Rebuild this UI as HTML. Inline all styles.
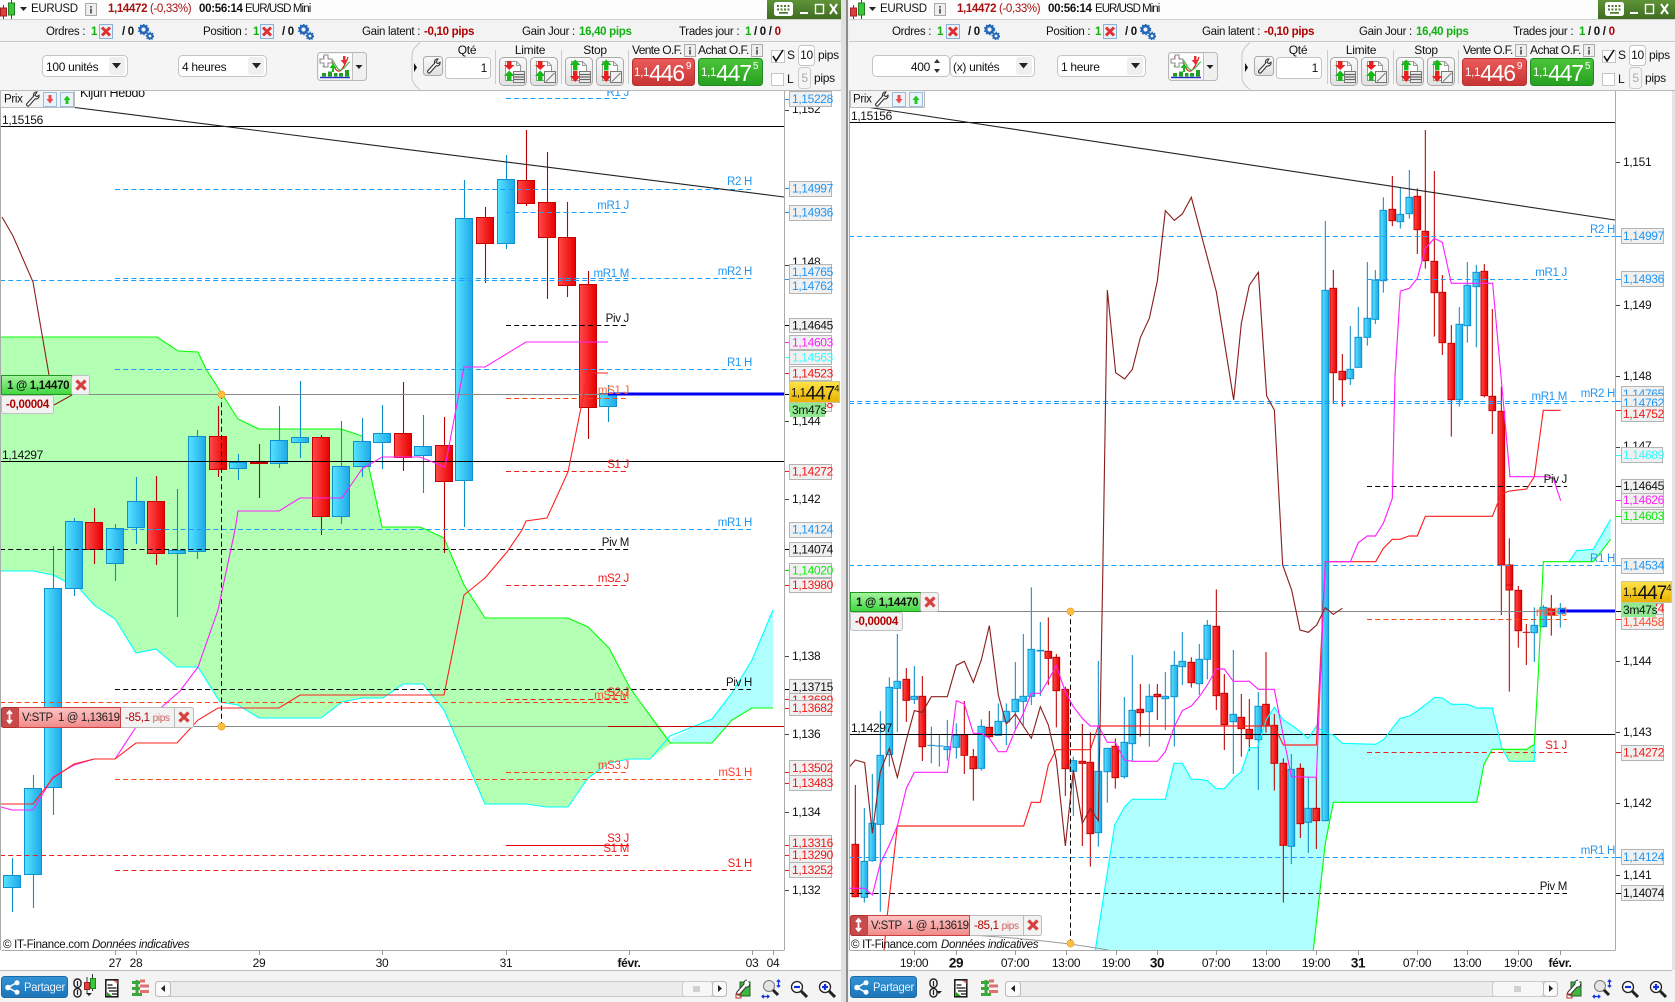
<!DOCTYPE html>
<html><head><meta charset="utf-8"><title>EURUSD</title>
<style>
html,body{margin:0;padding:0;background:#fff;width:1675px;height:1002px;overflow:hidden}
svg{display:block}
text{font-family:"Liberation Sans",sans-serif;font-size:11.5px;letter-spacing:-.3px;dominant-baseline:central;fill:#111}
.k{fill:#111}.bl{fill:#2196f3}.r{fill:#f01818}.dr{fill:#b00000}.g{fill:#12b012}
.e{text-anchor:end}.m{text-anchor:middle}.bd{font-weight:700}
.ax{font-size:12px;letter-spacing:-.35px}
.lb{fill:#f0f0f0;stroke:#b4b4b4;stroke-width:1}
.wb{stroke:#0e8ec8;stroke-width:3.2;fill:none}.wr{stroke:#c00000;stroke-width:3.2;fill:none}
.wb1{stroke:#0e8ec8;stroke-width:1.1;fill:none}.wr1{stroke:#c00000;stroke-width:1.1;fill:none}
.b{fill:url(#gb);stroke:#0f90d0;stroke-width:1}.c{fill:url(#gr);stroke:#c80000;stroke-width:1}
.b3{fill:url(#gb);stroke:#0f90d0;stroke-width:3}.c3{fill:url(#gr);stroke:#c80000;stroke-width:3}
.d{fill:none;stroke-dasharray:5 3.2;stroke-width:1}
.dbl{stroke:#1a9fff}.dbk{stroke:#000}.drd{stroke:#f02020}.dor{stroke:#f84818}
.ln{fill:none;stroke-width:1.1}
.ln3{fill:none;stroke-width:3.4}
.bx{fill:#fff;stroke:#c4c4c4;stroke-width:1}
</style></head><body>
<svg width="1675" height="1002" viewBox="0 0 1675 1002" xmlns="http://www.w3.org/2000/svg">
<defs>
<linearGradient id="gb" x1="0" x2="1" y1="0" y2="0"><stop offset="0" stop-color="#55e4ff"/><stop offset="1" stop-color="#1fa8e8"/></linearGradient>
<linearGradient id="gr" x1="0" x2="1" y1="0" y2="0"><stop offset="0" stop-color="#ff4a4a"/><stop offset="1" stop-color="#e80000"/></linearGradient>
<linearGradient id="gg" x1="0" x2="0" y1="0" y2="1"><stop offset="0" stop-color="#a6f5a0"/><stop offset="1" stop-color="#3fd63f"/></linearGradient>
<linearGradient id="gy" x1="0" x2="0" y1="0" y2="1"><stop offset="0" stop-color="#ffe44a"/><stop offset="1" stop-color="#e8b000"/></linearGradient>
<linearGradient id="gs" x1="0" x2="0" y1="0" y2="1"><stop offset="0" stop-color="#ffc4c4"/><stop offset="1" stop-color="#f08a8a"/></linearGradient>
<linearGradient id="gw" x1="0" x2="0" y1="0" y2="1"><stop offset="0" stop-color="#5f9338"/><stop offset="1" stop-color="#3f6c22"/></linearGradient>
<linearGradient id="gv" x1="0" x2="0" y1="0" y2="1"><stop offset="0" stop-color="#ea5c5a"/><stop offset="1" stop-color="#c83434"/></linearGradient>
<linearGradient id="ga" x1="0" x2="0" y1="0" y2="1"><stop offset="0" stop-color="#4cc43a"/><stop offset="1" stop-color="#27a020"/></linearGradient>
<linearGradient id="gbt" x1="0" x2="0" y1="0" y2="1"><stop offset="0" stop-color="#fafafa"/><stop offset="1" stop-color="#e0e0e0"/></linearGradient>
<linearGradient id="gp" x1="0" x2="0" y1="0" y2="1"><stop offset="0" stop-color="#3292d6"/><stop offset="1" stop-color="#1c76b8"/></linearGradient>
<symbol id="can" width="16" height="20" viewBox="0 0 16 20"><path d="M3.5 5v14M11.5 0v19" stroke="#444"/><rect x="0.5" y="8" width="6" height="8" fill="#e23c3c" stroke="#a02020"/><rect x="8.5" y="3" width="6" height="12" fill="#38c838" stroke="#208020"/></symbol>
<symbol id="xd" width="14" height="15" viewBox="0 0 14 15"><rect x=".5" y=".5" width="13" height="14" fill="#e9f2fb" stroke="#8ab0d8"/><path d="M3 3.5l8 8M11 3.5l-8 8" stroke="#e03030" stroke-width="3"/></symbol>
<symbol id="gear" width="16" height="16" viewBox="0 0 16 16"><circle cx="5.5" cy="5.5" r="3.4" fill="none" stroke="#2268b8" stroke-width="2.6"/><circle cx="5.5" cy="5.5" r="4.9" fill="none" stroke="#2268b8" stroke-width="1.6" stroke-dasharray="1.6 1.6"/><circle cx="12" cy="12" r="2.4" fill="none" stroke="#2268b8" stroke-width="2"/><circle cx="12" cy="12" r="3.7" fill="none" stroke="#2268b8" stroke-width="1.3" stroke-dasharray="1.4 1.4"/></symbol>
<symbol id="wr" width="15" height="17" viewBox="0 0 15 17"><path d="M12 1C9.5.7 8 2.8 8.6 5.2L2 12.5C.8 14 2.5 16 4 14.7L10.2 7.8C12.6 8.4 14.4 6.7 14 4.2L11.9 5.7 9.9 4.3Z" fill="#fff" stroke="#333" stroke-width="1.1"/></symbol>
<symbol id="i" width="12" height="13" viewBox="0 0 12 13"><rect x=".5" y=".5" width="11" height="12" fill="#eee" stroke="#aaa"/><path d="M5 3h2v1.6H5zM5 5.6h2V10.5H5z" fill="#666"/></symbol>
<symbol id="ad" width="14" height="15" viewBox="0 0 14 15"><rect x=".5" y=".5" width="13" height="14" fill="#eaf2fa" stroke="#9cbcdc"/><path d="M5.500 3h3v4h2L7 11.500 3.500 7h2z" fill="#f04848"/></symbol>
<symbol id="au" width="14" height="15" viewBox="0 0 14 15"><rect x=".5" y=".5" width="13" height="14" fill="#eaf2fa" stroke="#9cbcdc"/><path d="M5.500 12V8h-2L7 3.500 10.500 8h-2v4z" fill="#20c820"/></symbol>
<symbol id="lst" width="12" height="12" viewBox="0 0 12 12"><rect x=".5" y=".5" width="11" height="11" fill="#f0f0f0" stroke="#777"/><path d="M1 3.500h10M1 6h10M1 8.500h10" stroke="#666" stroke-width="1.300"/></symbol>
<symbol id="sl" width="12" height="12" viewBox="0 0 12 12"><rect x=".5" y=".5" width="11" height="11" fill="#f0f0f0" stroke="#777"/><path d="M2 10.500L10.500 2" stroke="#777"/></symbol>
<symbol id="bl1" width="28" height="29" viewBox="0 0 28 29"><rect x=".5" y=".5" width="27" height="28" rx="4" fill="url(#gbt)" stroke="#aaa"/><path d="M6.500 4.500h11l4 4v15h-15z" fill="#fff" stroke="#999"/><path d="M17.500 4.500v4h4" fill="none" stroke="#999"/><path d="M8 4h4.500v4h3L10.200 13 5 8h3z" fill="#e82020"/><path d="M8 24v-5H5l5.200-5.500L15.500 19h-3v5z" fill="#18b818"/><use href="#lst" x="14" y="14"/></symbol>
<symbol id="bl2" width="28" height="29" viewBox="0 0 28 29"><rect x=".5" y=".5" width="27" height="28" rx="4" fill="url(#gbt)" stroke="#aaa"/><path d="M6.500 4.500h11l4 4v15h-15z" fill="#fff" stroke="#999"/><path d="M17.500 4.500v4h4" fill="none" stroke="#999"/><path d="M8 4h4.500v4h3L10.200 13 5 8h3z" fill="#e82020"/><path d="M8 24v-5H5l5.200-5.500L15.500 19h-3v5z" fill="#18b818"/><use href="#sl" x="14" y="14"/></symbol>
<symbol id="bs1" width="28" height="29" viewBox="0 0 28 29"><rect x=".5" y=".5" width="27" height="28" rx="4" fill="url(#gbt)" stroke="#aaa"/><path d="M6.500 4.500h11l4 4v15h-15z" fill="#fff" stroke="#999"/><path d="M17.500 4.500v4h4" fill="none" stroke="#999"/><path d="M8 13.500V8H5l5.200-5.500L15.500 8h-3v5.500z" fill="#18b818"/><path d="M8 14h4.500v5h3L10.200 25 5 19h3z" fill="#e82020"/><use href="#lst" x="14" y="14"/></symbol>
<symbol id="bs2" width="28" height="29" viewBox="0 0 28 29"><rect x=".5" y=".5" width="27" height="28" rx="4" fill="url(#gbt)" stroke="#aaa"/><path d="M6.500 4.500h11l4 4v15h-15z" fill="#fff" stroke="#999"/><path d="M17.500 4.500v4h4" fill="none" stroke="#999"/><path d="M8 13.500V8H5l5.200-5.500L15.500 8h-3v5.500z" fill="#18b818"/><path d="M8 14h4.500v5h3L10.200 25 5 19h3z" fill="#e82020"/><use href="#sl" x="14" y="14"/></symbol>
<symbol id="ind" width="50" height="29" viewBox="0 0 50 29"><rect x=".5" y=".5" width="49" height="28" rx="3" fill="#f0f0f0" stroke="#b8b8b8"/><path d="M35.500 1v27" stroke="#c0c0c0"/><rect x="2" y="2" width="33" height="25" fill="#fff"/><path d="M3 25.500h30" stroke="#2030c0" stroke-width="1.600"/><path d="M5 21h4v3.500H5zM11 19.500h4v5h-4zM17 21h3.500v3.500H17zM22 21h4v3.500h-4zM28 18h4v6.500h-4z" fill="#20a020"/><path d="M6 5c6 0 9 4 11 9s5 7 8 3 5-9 6-12" stroke="#e02020" fill="none" stroke-width="1.200"/><path d="M6 15c3-6 6-9 9-7s5 11 9 10 7-8 9-8" stroke="#50b850" fill="none" stroke-width="1.200"/><path d="M7 3h4v4h4v4h-4v4H7v-4H3V7h4z" fill="#fff" stroke="#888"/><path d="M15 20v-4h-2.500l3.500-4.500 3.500 4.500H17v4z" fill="#18b818"/><path d="M26 4h2.500v4H31l-3.700 4.500L23.500 8H26z" fill="#e83030"/><path d="M38.500 13h7l-3.500 4z" fill="#222"/></symbol>
<symbol id="sel" width="10" height="6" viewBox="0 0 10 6"><path d="M0 0h9L4.500 5.500z" fill="#222"/></symbol>
<symbol id="kb" width="19" height="14" viewBox="0 0 19 14"><rect width="19" height="14" rx="2.500" fill="#fff"/><path d="M3 3h2v2H3zM6.500 3h2v2h-2zM10 3h2v2h-2zM13.500 3h2v2h-2zM3 6.500h2v2H3zM6.500 6.500h2v2h-2zM10 6.500h2v2h-2zM13.500 6.500h2v2h-2zM5 10h9v1.800H5z" fill="#4d7d2c"/></symbol>
<symbol id="chain" width="12" height="20" viewBox="0 0 12 20"><rect x="2" y="1" width="7" height="8.500" rx="3.400" fill="none" stroke="#222" stroke-width="1.400"/><rect x="2" y="10.500" width="7" height="8.500" rx="3.400" fill="none" stroke="#222" stroke-width="1.400"/><path d="M5.500 3v5M5.500 12v5" stroke="#222" stroke-width="1.200"/></symbol>
<symbol id="docb" width="14" height="19" viewBox="0 0 14 19"><rect x=".8" y=".8" width="12" height="17" fill="#fff" stroke="#111" stroke-width="1.500"/><path d="M2.500 6h5M2.500 9h9M4 12h8M7 15h5" stroke="#111" stroke-width="1.200"/><path d="M2 17l0-4 5 4z" fill="#18a018"/><path d="M8 1.500h4.500V5z" fill="#e07070"/></symbol>
<symbol id="brk" width="17" height="17" viewBox="0 0 17 17"><path d="M0 2h8v3H0zM0 8h8v3H0zM0 14h10v3H0z" fill="#3ca53c"/><path d="M8 .5h5v3H8zM8 5.500h9v3H8zM8 11h9v3H8z" fill="#e07070"/><path d="M5 1v16" stroke="#3ca53c" stroke-width="3"/></symbol>
<symbol id="tools" width="16" height="20" viewBox="0 0 16 20"><rect x="5" y="3" width="10" height="14" fill="#3fb83f" stroke="#206020"/><path d="M12 1c-2 0-3.500 2-3 4L2 13c-1.500 2 1 4 2.500 2.500L11 8c2 .5 4-1 3.500-3" fill="#fff" stroke="#333"/><path d="M1 15h5v4H1z" fill="none" stroke="#c03030"/></symbol>
<symbol id="zfit" width="20" height="20" viewBox="0 0 20 20"><circle cx="8" cy="7" r="5.500" fill="#e4e4e4" stroke="#777"/><path d="M12 11l5 5" stroke="#222" stroke-width="3"/><path d="M17.500 1v7M15.800 2.800L17.500 1l1.700 1.800M15.800 6.500L17.500 8l1.700-1.500M1 17.500h7M2.800 15.800L1 17.500l1.800 1.700M6.200 15.800L8 17.500l-1.800 1.700" stroke="#1030e0" fill="none" stroke-width="1.200"/></symbol>
<symbol id="zm" width="18" height="18" viewBox="0 0 18 18"><circle cx="7" cy="7" r="5.500" fill="#fff" stroke="#222" stroke-width="1.300"/><path d="M11 11l6 6" stroke="#222" stroke-width="3"/><path d="M4 7h6" stroke="#1030e0" stroke-width="2.200"/></symbol>
<symbol id="zp" width="18" height="18" viewBox="0 0 18 18"><circle cx="7" cy="7" r="5.500" fill="#fff" stroke="#222" stroke-width="1.300"/><path d="M11 11l6 6" stroke="#222" stroke-width="3"/><path d="M4 7h6M7 4v6" stroke="#1030e0" stroke-width="2.200"/></symbol>
<symbol id="share" width="15" height="15" viewBox="0 0 15 15"><path d="M12 2.500L3 7.500l9 5" stroke="#fff" stroke-width="1.500" fill="none"/><circle cx="12" cy="2.800" r="2.500" fill="#fff"/><circle cx="3" cy="7.500" r="2.800" fill="#fff"/><circle cx="12" cy="12.200" r="2.500" fill="#fff"/></symbol>
<symbol id="rx" width="12" height="12" viewBox="0 0 12 12"><path d="M1.500 1.500l9 9M10.500 1.500l-9 9" stroke="#d84040" stroke-width="3.200"/></symbol>
</defs>

<rect width="1675" height="1002" fill="#fff"/>

<!-- ================= LEFT CHART ================= -->
<polygon fill="#b3ffb3" points="1,337 157,337 178,351 198,352 206,369 238,419 259,429 341,429 362,436 382,527 420,527 427,530 444,538 464,585 485,618 568,618 588,627 609,648 630,688 672,743 650,759 629,759 609,763 588,778 568,807 547,807 526,804 485,804 444,710 423,684 403,684 383,698 362,698 342,702 321,718 259,718 238,705 220,702 198,667 177,667 156,649 136,653 115,619 94,605 80,589 53,575 33,571 1,571"/>
<polygon fill="#b0ffff" points="672,738 712,719 732,693 752,660 773,610 773,708 752,708 732,720 712,743 670,743"/>
<path class="ln" stroke="#00ff00" stroke-width="1.200" d="M1 337H157L178 351 198 352 206 369 238 419 259 429H341L362 436 382 527H420L427 530 444 538 464 585 485 618H568L588 627 609 648 630 688 670 743H712L732 720 752 708H773"/>
<path class="ln" stroke="#00ffff" stroke-width="1.200" d="M1 571H33L53 575 80 589 94 605 115 619 136 653 156 649 177 667H198L220 702 238 705 259 718H321L342 702 362 698H383L403 684H423L444 710 485 804H526L547 807H568L588 778 609 763 629 759H650L670 736 712 719 732 693 752 660 773 610"/>
<!-- wicks -->
<path class="wb1" d="M12.500 858V912M33.500 775V908M53.500 546V815M74.500 518V596M115.500 524V581M136.500 477V544M177.500 489V617M197.500 430V559M238.500 454V480M279.500 406V468M300.500 381V458M341.500 421V524M362.500 418V477M382.500 405V469M423.500 415V493M464.500 180V527M506.500 155V249M608.500 385V422"/>
<path class="wr1" d="M94.500 508V564M156.500 476V565M218.500 406V477M259.500 444V498M321.500 435V535M403.500 382V471M444.500 417V553M485.500 207V283M526.500 130V206M547.500 152V299M567.500 202V297M588.500 271V439"/>
<!-- bodies -->
<rect class="b" x="3.500" y="875.500" width="17" height="12"/><rect class="b" x="24.500" y="788.500" width="17" height="86"/><rect class="b" x="44.500" y="588.500" width="17" height="199"/><rect class="b" x="65.500" y="521.500" width="17" height="67"/><rect class="c" x="85.500" y="522.500" width="17" height="27"/><rect class="b" x="106.500" y="528.500" width="17" height="35"/><rect class="b" x="127.500" y="501.500" width="17" height="26"/><rect class="c" x="147.500" y="501.500" width="17" height="52"/><rect class="b" x="168.500" y="550.500" width="17" height="3"/><rect class="b" x="188.500" y="436.500" width="17" height="115"/><rect class="c" x="209.500" y="436.500" width="17" height="33"/><rect class="b" x="229.500" y="462.500" width="17" height="6"/><rect class="c" x="250.500" y="462.500" width="17" height="1"/><rect class="b" x="270.500" y="440.500" width="17" height="23"/><rect class="b" x="291.500" y="437.500" width="17" height="5"/><rect class="c" x="312.500" y="437.500" width="17" height="79"/><rect class="b" x="332.500" y="466.500" width="17" height="50"/><rect class="b" x="353.500" y="441.500" width="17" height="25"/><rect class="b" x="373.500" y="433.500" width="17" height="9"/><rect class="c" x="394.500" y="433.500" width="17" height="24"/><rect class="b" x="414.500" y="446.500" width="17" height="9"/><rect class="c" x="435.500" y="445.500" width="17" height="36"/><rect class="b" x="455.500" y="218.500" width="17" height="262"/><rect class="c" x="476.500" y="217.500" width="17" height="26"/><rect class="b" x="497.500" y="179.500" width="17" height="64"/><rect class="c" x="517.500" y="180.500" width="17" height="23"/><rect class="c" x="538.500" y="202.500" width="17" height="35"/><rect class="c" x="558.500" y="237.500" width="17" height="48"/><rect class="c" x="579.500" y="284.500" width="17" height="123"/><rect class="b" x="599.500" y="393.500" width="17" height="13"/>

<!-- level lines left -->
<path class="d dbl" d="M506 98.500H629M115 189.500H751M506 212.500H629M115 278.500H751M0 280.500H629M115 369.500H751M115 529.500H751"/>
<path class="d dbk" d="M506 325.500H629M0 549.500H629M115 689.500H751M221.500 394V726"/>
<path class="d drd" d="M506 471.500H629M506 585.500H629M506 699.500H629M0 855.500H629M115 870.500H751"/>
<path class="d dor" d="M506 398.500H629M0 702.500H629M506 772.500H629M115 779.500H751"/>
<path d="M506 845.500H629" stroke="#e80000" fill="none"/>
<path d="M1 126.500H784M1 461.500H784" stroke="#000" fill="none"/>
<path d="M47 104L784 197" stroke="#222" fill="none" stroke-width="1.100"/>
<path d="M1 394.500H608M1 726.500H608" stroke="#888" fill="none"/>
<path d="M608 394H784" stroke="#0000ee" stroke-width="3" fill="none"/>
<path d="M608 726.500H784" stroke="#c00000" fill="none"/>
<path class="ln" stroke="#ff20ff" d="M1 807L12 810H33L53 777 74 765 94 759H115L136 727 163 706 180 691 198 667 218 610 235 530 238 511H279L300 498H342L362 469 382 457H420L445 467 464 367H485L526 342H608"/>
<path class="ln" stroke="#ff2020" d="M1 804H33L53 778 74 764 94 759H115L136 743H177L198 720 218 708H279L300 695H444L464 595 485 578 507 552 522 530 526 521 547 518 568 472 588 373H608"/>
<path class="ln" stroke="#8b2020" d="M2 217L13 236 33 282 49 375M54 405L72 395"/>
<circle cx="221.500" cy="394.500" r="3.500" fill="#ffc040" stroke="#e8a020" stroke-width=".7"/>
<circle cx="221.500" cy="726.500" r="3.500" fill="#ffc040" stroke="#e8a020" stroke-width=".7"/>
<!-- chart text left -->
<text x="2" y="120" class="ax">1,15156</text><text x="2" y="455" class="ax">1,14297</text>
<g transform="translate(0 1)">
<text x="629" y="92" class="e bl">R1 J</text><text x="752" y="181" class="e bl">R2 H</text><text x="629" y="205" class="e bl">mR1 J</text><text x="629" y="273" class="e bl">mR1 M</text><text x="752" y="271" class="e bl">mR2 H</text><text x="629" y="318" class="e k">Piv J</text><text x="752" y="362" class="e bl">R1 H</text><text x="629" y="390" class="e" style="fill:#ff6030">mS1 J</text><text x="629" y="464" class="e r">S1 J</text><text x="752" y="522" class="e bl">mR1 H</text><text x="629" y="542" class="e k">Piv M</text><text x="629" y="578" class="e r">mS2 J</text><text x="752" y="682" class="e k">Piv H</text><text x="629" y="692" class="e r">S2 J</text><text x="629" y="695" class="e" style="fill:#ff5030">mS1 M</text><text x="629" y="765" class="e" style="fill:#ff4030">mS3 J</text><text x="752" y="772" class="e" style="fill:#ff4030">mS1 H</text><text x="629" y="838" class="e r">S3 J</text><text x="629" y="848" class="e r">S1 M</text><text x="752" y="863" class="e r">S1 H</text>
</g>
<text x="3" y="945">© IT-Finance.com</text><text x="92" y="945" style="font-style:italic">Données indicatives</text>

<!-- ================= RIGHT CHART ================= -->
<g transform="translate(848 570) scale(.33333)" >
<polygon fill="#b0ffff" points="742,1140 800,765 830,710 853,688 952,688 978,580 1003,580 1030,628 1054,628 1078,632 1105,656 1129,656 1156,625 1180,605 1204,533 1228,533 1255,448 1279,412 1306,450 1330,465 1357,485 1381,505 1405,468 1432,490 1456,495 1483,520 1583,523 1608,508 1656,445 1684,438 1708,423 1761,382 1784,384 1810,403 1858,403 1886,414 1933,414 1961,533 1966,538 1933,538 1908,583 1886,697 1456,697 1432,820 1396,1140"/>
<polygon fill="#b3ffb3" points="1966,538 2036,538 2059,523 2059,574 1984,574"/>
<polygon fill="#b0ffff" points="2163,-25 2186,-58 2236,-62 2288,-152 2288,-92 2236,-25"/>
</g>
<g transform="translate(848 570) scale(.33333)">
<path class="wb" d="M49 714V998M73 612V875M97 423V1025M124 322V590M148 192V486M199 288V402M250 470V580M274 495V590M298 450V572M325 460V566M400 448V602M451 400V497M475 400V525M502 276V478M526 192V465M550 52V405M577 156V378M676 560V738M751 273V830M778 535V698M829 381V626M853 255V573M904 342V530M952 306V480M979 243V530M1003 186V345M1054 222V375M1078 150V328M1156 240V612M1231 366V660"/>
<path class="wr" d="M22 645V982M175 294V456M223 318V573M349 393V612M376 537V692M424 423V503M601 142V345M625 252V472M652 350V678M703 462V828M727 487V890M802 505V656M877 342V500M928 342V450M1030 262V353M1105 58V420M1129 312V540M1180 372V560M1204 387V543M1254 246V488"/>
<path d="M238 526H262M262 528H286" stroke="#0e8ec8" stroke-width="3"/>
<rect class="c3" x="12" y="823" width="20" height="157"/><rect class="b3" x="39" y="874" width="20" height="108"/><rect class="b3" x="63" y="760" width="20" height="112"/><rect class="b3" x="87" y="556" width="20" height="207"/><rect class="b3" x="114" y="352" width="20" height="202"/><rect class="b3" x="138" y="334" width="20" height="21"/><rect class="c3" x="165" y="328" width="20" height="63"/><rect class="b3" x="189" y="379" width="20" height="9"/><rect class="c3" x="213" y="379" width="20" height="151"/><rect class="b3" x="288" y="530" width="20" height="9"/><rect class="b3" x="315" y="496" width="20" height="36"/><rect class="c3" x="339" y="494" width="20" height="62"/><rect class="c3" x="366" y="560" width="20" height="36"/><rect class="b3" x="390" y="469" width="20" height="126"/><rect class="c3" x="414" y="472" width="20" height="28"/><rect class="b3" x="441" y="454" width="20" height="42"/><rect class="b3" x="465" y="424" width="20" height="31"/><rect class="b3" x="492" y="388" width="20" height="37"/><rect class="b3" x="516" y="379" width="20" height="15"/><rect class="b3" x="540" y="238" width="20" height="141"/><rect class="b3" x="567" y="241" width="20" height="2"/><rect class="c3" x="591" y="244" width="20" height="21"/><rect class="c3" x="615" y="262" width="20" height="100"/><rect class="c3" x="642" y="358" width="20" height="238"/><rect class="b3" x="666" y="572" width="20" height="32"/><rect class="c3" x="693" y="574" width="20" height="6"/><rect class="c3" x="717" y="577" width="20" height="214"/><rect class="b3" x="741" y="604" width="20" height="184"/><rect class="b3" x="768" y="535" width="20" height="70"/><rect class="c3" x="792" y="529" width="20" height="94"/><rect class="b3" x="819" y="517" width="20" height="103"/><rect class="b3" x="843" y="421" width="20" height="100"/><rect class="c3" x="867" y="418" width="20" height="10"/><rect class="b3" x="894" y="379" width="20" height="46"/><rect class="c3" x="918" y="373" width="20" height="7"/><rect class="b3" x="942" y="379" width="20" height="7"/><rect class="b3" x="969" y="286" width="20" height="94"/><rect class="b3" x="993" y="274" width="20" height="16"/><rect class="c3" x="1020" y="277" width="20" height="61"/><rect class="b3" x="1044" y="268" width="20" height="73"/><rect class="b3" x="1068" y="166" width="20" height="102"/><rect class="c3" x="1095" y="169" width="20" height="208"/><rect class="c3" x="1119" y="370" width="20" height="94"/><rect class="b3" x="1146" y="433" width="20" height="22"/><rect class="c3" x="1170" y="442" width="20" height="34"/><rect class="c3" x="1194" y="478" width="20" height="28"/><rect class="b3" x="1221" y="409" width="20" height="100"/><rect class="c3" x="1244" y="403" width="20" height="64"/>
</g>
<g transform="translate(1260 570) scale(.33333)">
<path class="wr" d="M43 432V662M70 565V998M121 580V804M169 620V837"/>
<path class="wb" d="M94 552V882M145 622V849M196 0V754"/>
<path class="wr" d="M724 0V135M748 0V365M775 48V233M799 162V285M874 75V197"/>
<path class="wb" d="M823 112V276M850 105V172M901 99V173"/>
<path d="M788 187H810" stroke="#c00000" stroke-width="3"/>
<rect class="c3" x="33" y="466" width="20" height="114"/><rect class="c3" x="60" y="580" width="20" height="246"/><rect class="b3" x="84" y="598" width="20" height="231"/><rect class="c3" x="111" y="595" width="20" height="166"/><rect class="b3" x="135" y="715" width="20" height="42"/><rect class="c3" x="159" y="715" width="20" height="37"/><rect class="b3" x="186" y="-839" width="20" height="1591"/>
<rect class="c3" x="738" y="-15" width="20" height="75"/><rect class="c3" x="765" y="61" width="20" height="121"/><rect class="b3" x="813" y="166" width="20" height="22"/><rect class="b3" x="840" y="112" width="20" height="58"/><rect class="c3" x="864" y="117" width="20" height="18"/><rect class="b3" x="894" y="115" width="20" height="16"/>
</g>
<g transform="translate(1260 110) scale(.33333)">
<path class="wb" d="M271 648V825M295 591V772M322 456V707M346 480V642M370 262V548M421 232V356M448 180V326M598 591V890M622 456V698M649 465V712"/>
<path class="wb" d="M196 333V541"/>
<path class="wr" d="M220 480V880M247 732V890M397 198V348M472 235V432M496 60V476M523 183V680M547 495V735M574 645V980M673 462V862M697 597V972M724 830V1380M748 1285V1400"/>
<rect class="c3" x="210" y="535" width="20" height="253"/><rect class="c3" x="237" y="784" width="20" height="25"/><rect class="b3" x="261" y="778" width="20" height="28"/><rect class="b3" x="285" y="682" width="20" height="90"/><rect class="b3" x="312" y="625" width="20" height="57"/><rect class="b3" x="336" y="510" width="20" height="118"/><rect class="b3" x="360" y="301" width="20" height="211"/><rect class="c3" x="387" y="298" width="20" height="34"/><rect class="b3" x="411" y="313" width="20" height="22"/><rect class="b3" x="438" y="262" width="20" height="49"/><rect class="c3" x="462" y="259" width="20" height="100"/><rect class="c3" x="486" y="364" width="20" height="88"/><rect class="c3" x="513" y="454" width="20" height="94"/><rect class="c3" x="537" y="547" width="20" height="151"/><rect class="c3" x="564" y="700" width="20" height="169"/><rect class="b3" x="588" y="643" width="20" height="226"/><rect class="b3" x="612" y="526" width="20" height="121"/><rect class="b3" x="639" y="487" width="20" height="43"/><rect class="c3" x="663" y="484" width="20" height="373"/><rect class="c3" x="687" y="859" width="20" height="43"/><rect class="c3" x="714" y="904" width="20" height="461"/><rect class="c3" x="738" y="1365" width="20" height="60"/>
</g>
<!-- right lines -->
<path class="d dbl" d="M849 236.500H1615M1367 279.500H1567M849 401.500H1615M849 403.500H1567M849 565.500H1615M849 857.500H1615"/>
<path class="d dbk" d="M1367 486.500H1567M849 893.500H1567M1070.500 611V943"/>
<path class="d dor" d="M1367 619.500H1567"/>
<path class="d drd" d="M1367 752.500H1567"/>
<path d="M849 122.500H1615M849 734.500H1615" stroke="#000" fill="none"/>
<path d="M860 106L1615 220" stroke="#222" fill="none" stroke-width="1.100"/>
<path d="M849 611.500H1560" stroke="#888" fill="none"/>
<path d="M1560 611H1615" stroke="#0000ee" stroke-width="3" fill="none"/>
<path d="M970 935C1020 938 1070 943 1108 950" stroke="#999" fill="none"/>
<g transform="translate(848 570) scale(.33333)">
<path class="ln3" stroke="#00ffff" d="M742 1140L800 765 830 710 853 688H952L978 580H1003L1030 628H1054L1078 632 1105 656H1129L1156 625 1180 605 1204 533H1228L1255 448 1279 412 1306 450 1330 465 1357 485 1381 505 1405 468 1432 490 1456 495 1483 520 1583 523 1608 508 1656 445 1684 438 1708 423 1761 382 1784 384 1810 403H1858L1886 414H1933L1961 533 1984 574H2059V523M2163 -25L2186 -58 2236 -62 2288 -152"/>
<path class="ln3" stroke="#00ff00" d="M1396 1140L1432 820 1456 697H1886L1908 583 1933 538H2036L2059 523 2071 310 2086 -25H2236L2288 -92"/>
<path class="ln3" stroke="#ff2020" d="M108 1140L118 1035 148 768H527L550 697H577L601 585 625 539H727L751 468H1279L1306 525H1405L1432 -25H1583L1606 -65 1633 -92H1657L1683 -102H1708L1732 -161H1933L1960 -228 1984 -237 2036 -243 2059 -280 2086 -479H2138"/>
<path class="ln3" stroke="#ff20ff" d="M5 955H50L73 975 97 880 124 825 148 768 175 655 199 607H298L325 392 349 402 376 490H400L424 505 451 545H475L502 480 526 430 550 370H577L601 330 625 287 652 365 676 410 703 445 727 468H751L778 517H802L829 570 853 574H928L952 545 979 470 1003 422 1030 408 1054 380 1078 345 1105 297H1129L1156 334H1204L1231 358H1279L1306 498 1330 620 1405 622 1432 -25H1507L1531 -82 1558 -102H1582L1606 -140 1633 -215 1641 -580 1657 -837 1684 -845 1708 -875 1732 -965 1759 -995 1783 -983 1810 -860H1934L1986 -280H2096L2116 -275 2138 -208"/>
<path class="ln3" stroke="#8b2020" d="M5 590L22 570 50 578 73 790 97 605 124 535 148 622 175 510 199 422 223 427 250 380H298L325 286 349 274 376 337 400 270 424 167 451 375 475 462 502 432 550 505 577 410 601 465 625 570 652 828 676 600 703 760 727 715 751 752 764 30 778 -840 803 -592 830 -573 853 -602 877 -697 904 -755 928 -867 952 -1078 979 -1049 1003 -1068 1030 -1118 1080 -930 1105 -835 1157 -510 1180 -740 1204 -854 1231 -893 1256 -522 1279 -480 1304 -15 1331 60 1356 180 1381 187 1406 165 1432 113 1456 133 1483 115"/>
</g>
<circle cx="1070.500" cy="611.500" r="3.500" fill="#ffc040" stroke="#e8a020" stroke-width=".7"/>
<circle cx="1070.500" cy="943.500" r="3.500" fill="#ffc040" stroke="#e8a020" stroke-width=".7"/>
<!-- chart text right -->
<text x="851" y="116" class="ax">1,15156</text><text x="851" y="728" class="ax">1,14297</text>
<g transform="translate(0 1)">
<text x="1615" y="229" class="e bl">R2 H</text><text x="1567" y="272" class="e bl">mR1 J</text><text x="1567" y="396" class="e bl">mR1 M</text><text x="1615" y="393" class="e bl">mR2 H</text><text x="1567" y="479" class="e k">Piv J</text><text x="1615" y="558" class="e bl">R1 H</text><text x="1567" y="612" class="e" style="fill:#ff6030">mS1 J</text><text x="1567" y="745" class="e r">S1 J</text><text x="1615" y="850" class="e bl">mR1 H</text><text x="1567" y="886" class="e k">Piv M</text><text x="1567" y="955" class="e r">S2 J</text>
</g>
<text x="851" y="945">© IT-Finance.com</text><text x="941" y="945" style="font-style:italic">Données indicatives</text>

<!-- ======= tags left ======= -->
<rect x="1.500" y="375.500" width="70" height="19" fill="url(#gg)" stroke="#1f9a1f"/>
<text x="7" y="386" class="bd">1 @ 1,14470</text>
<rect x="71.500" y="375.500" width="18" height="19" rx="2" fill="#f2f2f2" stroke="#c0c0c0"/><use href="#rx" x="75" y="379"/>
<rect x="1.500" y="395.500" width="52" height="18" rx="2" fill="#f2f2f2" stroke="#c0c0c0"/><text x="6" y="405" class="bd dr">-0,00004</text>
<rect x="1.500" y="707.500" width="192" height="20" rx="2" fill="#f2f2f2" stroke="#bbb"/>
<rect x="1.500" y="707.500" width="17" height="20" rx="2" fill="#c84a4a" stroke="#b03030"/><path d="M9.500 711v12M7 714l2.500-3 2.500 3M7 720l2.500 3 2.500-3" stroke="#fff" stroke-width="1.800" fill="none"/>
<rect x="18.500" y="707.500" width="102" height="20" fill="url(#gs)" stroke="#c84040"/><text x="22" y="718" style="fill:#222;font-size:11.500px;letter-spacing:-.4px">V:STP</text><text x="58" y="718" style="fill:#222;font-size:11.500px;letter-spacing:-.4px">1 @ 1,13619</text>
<text x="125" y="718" class="dr">-85,1 <tspan style="font-size:10px;fill:#d06060">pips</tspan></text><path d="M174.500 708v19" stroke="#bbb"/><use href="#rx" x="178" y="711"/>
<!-- ======= tags right ======= -->
<rect x="850.500" y="592.500" width="70" height="19" fill="url(#gg)" stroke="#1f9a1f"/><text x="856" y="603" class="bd">1 @ 1,14470</text>
<rect x="920.500" y="592.500" width="18" height="19" rx="2" fill="#f2f2f2" stroke="#c0c0c0"/><use href="#rx" x="924" y="596"/>
<rect x="850.500" y="612.500" width="52" height="18" rx="2" fill="#f2f2f2" stroke="#c0c0c0"/><text x="855" y="622" class="bd dr">-0,00004</text>
<rect x="850.500" y="915.500" width="191" height="20" rx="2" fill="#f2f2f2" stroke="#bbb"/>
<rect x="850.500" y="915.500" width="17" height="20" rx="2" fill="#c84a4a" stroke="#b03030"/><path d="M858.500 919v12M856 922l2.500-3 2.500 3M856 928l2.500 3 2.500-3" stroke="#fff" stroke-width="1.800" fill="none"/>
<rect x="867.500" y="915.500" width="102" height="20" fill="url(#gs)" stroke="#c84040"/><text x="871" y="926" style="fill:#222;font-size:11.500px;letter-spacing:-.4px">V:STP</text><text x="907" y="926" style="fill:#222;font-size:11.500px;letter-spacing:-.4px">1 @ 1,13619</text>
<text x="974" y="926" class="dr">-85,1 <tspan style="font-size:10px;fill:#d06060">pips</tspan></text><path d="M1023.500 916v19" stroke="#bbb"/><use href="#rx" x="1027" y="919"/>

<!-- ======= axes area left ======= -->
<rect x="0" y="951" width="841" height="20" fill="#fff"/><rect x="849" y="951" width="826" height="20" fill="#fff"/>
<rect x="785" y="90" width="57" height="880" fill="#fff"/>
<path d="M784.500 90V950M1.500 950.500H784.500M0.500 90V950" stroke="#ababab" fill="none"/>
<path d="M785 110.500h4M785 265.500h4M785 421.500h4M785 499.500h4M785 656.500h4M785 734.500h4M785 812.500h4M785 890.500h4" stroke="#444"/>
<path d="M115.500 950v5M136.500 950v5M259.500 950v5M382.500 950v5M506.500 950v5M629.500 950v5M752.500 950v5M773.500 950v5" stroke="#999"/>
<text x="792" y="109" class="ax">1,152</text><text x="792" y="262" class="ax">1,148</text><text x="792" y="421" class="ax">1,144</text><text x="792" y="499" class="ax">1,142</text><text x="792" y="656" class="ax">1,138</text><text x="792" y="734" class="ax">1,136</text><text x="792" y="812" class="ax">1,134</text><text x="792" y="890" class="ax">1,132</text>
<path stroke="#2196f3" d="M785 99.500h4M785 188.500h4M785 212.500h4M785 279.500h4"/><path stroke="#000" d="M785 325.500h4M785 549.500h4M785 689.500h4M785 394.500h4"/><path stroke="#ff20ff" d="M785 342.500h4"/><path stroke="#30ffff" d="M785 357.500h4"/><path stroke="#e82020" d="M785 373.500h4M785 471.500h4M785 585.500h4M785 699.500h4M785 708.500h4M785 772.500h4M785 783.500h4M785 845.500h4M785 855.500h4M785 870.500h4"/><path stroke="#00e800" d="M785 570.500h4"/>
<g>
<rect class="lb" x="789.500" y="91.500" width="42" height="15"/><text x="792" y="99" class="ax bl">1,15228</text>
<rect class="lb" x="789.500" y="181.500" width="42" height="15"/><text x="792" y="188.500" class="ax bl">1,14997</text>
<rect class="lb" x="789.500" y="205.500" width="42" height="15"/><text x="792" y="212.500" class="ax bl">1,14936</text>
<rect class="lb" x="789.500" y="264.500" width="42" height="15"/><text x="792" y="272" class="ax bl">1,14765</text>
<rect class="lb" x="789.500" y="278.500" width="42" height="15"/><text x="792" y="286" class="ax bl">1,14762</text>
<rect class="lb" x="789.500" y="318.500" width="42" height="14"/><text x="792" y="325.500" class="ax k">1,14645</text>
<rect class="lb" x="789.500" y="335.500" width="42" height="14"/><text x="792" y="342.500" class="ax" style="fill:#ff20ff">1,14603</text>
<rect class="lb" x="789.500" y="350.500" width="42" height="14"/><text x="792" y="357.500" class="ax" style="fill:#30ffff">1,14563</text>
<rect class="lb" x="789.500" y="366.500" width="42" height="14"/><text x="792" y="373.500" class="ax r">1,14523</text>
<rect class="lb" x="789.500" y="396.500" width="42" height="15"/><text x="792" y="404" class="ax r">1,14458</text>
<rect x="789.500" y="381.500" width="50" height="21" fill="url(#gy)" stroke="#c8c8a0"/><text x="791" y="393.500" style="font-size:11.500px;letter-spacing:-.5px">1,1<tspan style="font-size:19px;letter-spacing:-1px">447</tspan><tspan dy="-5" style="font-size:9.500px">4</tspan></text>
<rect x="790" y="403" width="35" height="14" fill="#90e890"/><text x="792" y="410" class="ax">3m47s</text>
<rect class="lb" x="789.500" y="464.500" width="42" height="15"/><text x="792" y="471.500" class="ax r">1,14272</text>
<rect class="lb" x="789.500" y="522.500" width="42" height="15"/><text x="792" y="529.500" class="ax bl">1,14124</text>
<rect class="lb" x="789.500" y="542.500" width="42" height="14"/><text x="792" y="549.500" class="ax k">1,14074</text>
<rect class="lb" x="789.500" y="563.500" width="42" height="14"/><text x="792" y="570.500" class="ax" style="fill:#10e810">1,14020</text>
<rect class="lb" x="789.500" y="578.500" width="42" height="14"/><text x="792" y="585" class="ax r">1,13980</text>
<rect class="lb" x="789.500" y="679.500" width="42" height="14"/><text x="792" y="687" class="ax k">1,13715</text>
<rect class="lb" x="789.500" y="693.500" width="42" height="14"/><text x="792" y="700" class="ax r">1,13689</text>
<rect class="lb" x="789.500" y="700.500" width="42" height="15"/><text x="792" y="708" class="ax r">1,13682</text>
<rect class="lb" x="789.500" y="760.500" width="42" height="15"/><text x="792" y="768" class="ax r">1,13502</text>
<rect class="lb" x="789.500" y="775.500" width="42" height="15"/><text x="792" y="783" class="ax r">1,13483</text>
<rect class="lb" x="789.500" y="835.500" width="42" height="15"/><text x="792" y="843" class="ax r">1,13316</text>
<rect class="lb" x="789.500" y="848.500" width="42" height="14"/><text x="792" y="855" class="ax r">1,13290</text>
<rect class="lb" x="789.500" y="862.500" width="42" height="15"/><text x="792" y="870" class="ax r">1,13252</text>
</g>
<g class="ax"><text x="115" y="963" class="m ax">27</text><text x="136" y="963" class="m ax">28</text><text x="259" y="963" class="m ax">29</text><text x="382" y="963" class="m ax">30</text><text x="506" y="963" class="m ax">31</text><text x="629" y="963" class="m bd ax">févr.</text><text x="752" y="963" class="m ax">03</text><text x="773" y="963" class="m ax">04</text></g>

<!-- ======= axes area right ======= -->
<rect x="1616" y="90" width="56" height="880" fill="#fff"/>
<path d="M1615.500 90V950M849.500 950.500H1615.500M849.500 90V950" stroke="#ababab" fill="none"/>
<path d="M1616 162.500h4M1616 305.500h4M1616 376.500h4M1616 447.500h4M1616 661.500h4M1616 732.500h4M1616 803.500h4M1616 875.500h4" stroke="#444"/>
<path d="M914.500 950v5M956.500 950v5M1015.500 950v5M1066.500 950v5M1116.500 950v5M1157.500 950v5M1216.500 950v5M1266.500 950v5M1316.500 950v5M1358.500 950v5M1417.500 950v5M1467.500 950v5M1518.500 950v5M1560.500 950v5" stroke="#999"/>
<text x="1623" y="162" class="ax">1,151</text><text x="1623" y="305" class="ax">1,149</text><text x="1623" y="376" class="ax">1,148</text><text x="1623" y="446" class="ax">1,147</text><text x="1623" y="661" class="ax">1,144</text><text x="1623" y="732" class="ax">1,143</text><text x="1623" y="803" class="ax">1,142</text><text x="1623" y="875" class="ax">1,141</text>
<path stroke="#2196f3" d="M1616 236.500h5M1616 279.500h5M1616 401.500h5M1616 565.500h5M1616 857.500h5"/><path stroke="#000" d="M1616 486.500h5M1616 893.500h5M1616 611.500h5"/><path stroke="#e82020" d="M1616 410.500h5M1616 619.500h5M1616 752.500h5"/><path stroke="#30ffff" d="M1616 455.500h5"/><path stroke="#ff20ff" d="M1616 500.500h5"/><path stroke="#00e800" d="M1616 516.500h5"/>
<g>
<rect class="lb" x="1621.500" y="228.500" width="42" height="15"/><text x="1623" y="236" class="ax bl">1,14997</text>
<rect class="lb" x="1621.500" y="271.500" width="42" height="15"/><text x="1623" y="279" class="ax bl">1,14936</text>
<rect class="lb" x="1621.500" y="386.500" width="42" height="15"/><text x="1623" y="394" class="ax bl">1,14765</text>
<rect class="lb" x="1621.500" y="395.500" width="42" height="15"/><text x="1623" y="403" class="ax bl">1,14762</text>
<rect class="lb" x="1621.500" y="406.500" width="42" height="15"/><text x="1623" y="414" class="ax r">1,14752</text>
<rect class="lb" x="1621.500" y="447.500" width="41" height="15"/><text x="1623" y="455" class="ax" style="fill:#30ffff">1,14689</text>
<rect class="lb" x="1621.500" y="479.500" width="42" height="14"/><text x="1623" y="486" class="ax k">1,14645</text>
<rect class="lb" x="1621.500" y="493.500" width="42" height="14"/><text x="1623" y="500" class="ax" style="fill:#ff20ff">1,14626</text>
<rect class="lb" x="1621.500" y="509.500" width="42" height="14"/><text x="1623" y="516" class="ax" style="fill:#10e810">1,14603</text>
<rect class="lb" x="1621.500" y="558.500" width="42" height="15"/><text x="1623" y="565.500" class="ax bl">1,14534</text>
<rect class="lb" x="1621.500" y="603.500" width="42" height="11"/><text x="1623" y="608.500" class="ax r">1,14474</text>
<rect class="lb" x="1621.500" y="614.500" width="42" height="15"/><text x="1623" y="622" class="ax" style="fill:#ff5030">1,14458</text>
<rect x="1621.500" y="581.500" width="50" height="21" fill="url(#gy)" stroke="#c8c8a0"/><text x="1623" y="593" style="font-size:11.500px;letter-spacing:-.5px">1,1<tspan style="font-size:19px;letter-spacing:-1px">447</tspan><tspan dy="-5" style="font-size:9.500px">4</tspan></text>
<rect x="1621" y="603" width="35" height="14" fill="#90e890"/><text x="1623" y="610" class="ax">3m47s</text>
<rect class="lb" x="1621.500" y="745.500" width="42" height="15"/><text x="1623" y="752.500" class="ax r">1,14272</text>
<rect class="lb" x="1621.500" y="849.500" width="42" height="15"/><text x="1623" y="857" class="ax bl">1,14124</text>
<rect class="lb" x="1621.500" y="885.500" width="42" height="15"/><text x="1623" y="893" class="ax k">1,14074</text>
</g>
<text x="914" y="963" class="m ax">19:00</text><text x="956" y="963" class="m bd ax" style="font-size:13.500px">29</text><text x="1015" y="963" class="m ax">07:00</text><text x="1066" y="963" class="m ax">13:00</text><text x="1116" y="963" class="m ax">19:00</text><text x="1157" y="963" class="m bd ax" style="font-size:13.500px">30</text><text x="1216" y="963" class="m ax">07:00</text><text x="1266" y="963" class="m ax">13:00</text><text x="1316" y="963" class="m ax">19:00</text><text x="1358" y="963" class="m bd ax" style="font-size:13.500px">31</text><text x="1417" y="963" class="m ax">07:00</text><text x="1467" y="963" class="m ax">13:00</text><text x="1518" y="963" class="m ax">19:00</text><text x="1560" y="963" class="m bd ax">févr.</text>

<!-- ======= window separators ======= -->
<rect x="841" y="0" width="5" height="1002" fill="#e0e0e0"/><rect x="846" y="0" width="2" height="1002" fill="#8c8c8c"/><rect x="848" y="0" width="1" height="1002" fill="#f0f0f0"/>
<rect x="1672" y="90" width="3" height="912" fill="#e4e4e4"/>

<!-- ======= bottom bars ======= -->
<rect x="0" y="970" width="841" height="32" fill="#f4f4f4"/><path d="M0 970.500H841" stroke="#bcbcbc"/>
<rect x="849" y="970" width="826" height="32" fill="#f4f4f4"/><path d="M849 970.500H1672" stroke="#bcbcbc"/>
<rect x="1.500" y="976.500" width="66" height="21" rx="3" fill="url(#gp)" stroke="#1a6aa8"/><use href="#share" x="5" y="980"/><text x="24" y="987" textLength="41" lengthAdjust="spacingAndGlyphs" style="fill:#e8f4ff;font-size:12px">Partager</text>
<rect x="850.500" y="976.500" width="66" height="21" rx="3" fill="url(#gp)" stroke="#1a6aa8"/><use href="#share" x="854" y="980"/><text x="873" y="987" textLength="41" lengthAdjust="spacingAndGlyphs" style="fill:#e8f4ff;font-size:12px">Partager</text>
<use href="#chain" x="72" y="978"/><path d="M87 977v17M92.500 974v17" stroke="#333"/><rect x="84.500" y="982.500" width="5" height="7" fill="#e23c3c" stroke="#a02020"/><rect x="90.500" y="978.500" width="5" height="10" fill="#38c838" stroke="#208020"/><path d="M86 993h6l-3 3z" fill="#222"/><use href="#docb" x="105" y="979"/><use href="#brk" x="132" y="979"/>
<use href="#chain" x="928" y="978"/><path d="M936 991h6l-3 3z" fill="#222"/><use href="#docb" x="954" y="979"/><use href="#brk" x="981" y="979"/>
<rect x="155.500" y="981.500" width="571" height="15" rx="3" fill="#ececec" stroke="#c8c8c8"/><rect x="155.500" y="981.500" width="15" height="15" rx="3" fill="#fafafa" stroke="#bbb"/><path d="M165 985v7l-4-3.500z" fill="#222"/><rect x="682.500" y="981.500" width="30" height="15" rx="3" fill="#f7f7f7" stroke="#ccc"/><path d="M693 987h7M693 989h7M693 991h7" stroke="#aaa"/><rect x="712.500" y="981.500" width="14" height="15" rx="3" fill="#fafafa" stroke="#bbb"/><path d="M718 985v7l4-3.500z" fill="#222"/>
<use href="#tools" x="735" y="979"/><use href="#zfit" x="761" y="979"/><use href="#zm" x="790" y="980"/><use href="#zp" x="818" y="980"/>
<rect x="1005.500" y="981.500" width="552" height="15" rx="3" fill="#ececec" stroke="#c8c8c8"/><rect x="1005.500" y="981.500" width="15" height="15" rx="3" fill="#fafafa" stroke="#bbb"/><path d="M1015 985v7l-4-3.500z" fill="#222"/><rect x="1492.500" y="981.500" width="51" height="15" rx="3" fill="#f7f7f7" stroke="#ccc"/><path d="M1514 987h7M1514 989h7M1514 991h7" stroke="#aaa"/><rect x="1543.500" y="981.500" width="14" height="15" rx="3" fill="#fafafa" stroke="#bbb"/><path d="M1549 985v7l4-3.500z" fill="#222"/>
<use href="#tools" x="1566" y="979"/><use href="#zfit" x="1592" y="979"/><use href="#zm" x="1621" y="980"/><use href="#zp" x="1649" y="980"/>

<!-- ======= top header left ======= -->
<rect x="0" y="0" width="841" height="20" fill="#fdfdfd"/><path d="M0 19.500H841" stroke="#d0d0d0"/>
<rect x="0" y="20" width="841" height="22" fill="#f3f3f3"/><path d="M0 41.500H841" stroke="#c8c8c8"/>
<rect x="0" y="42" width="841" height="48" fill="#f5f5f5"/><path d="M0 90.500H841" stroke="#b8b8b8"/>
<use href="#can" x="0" y="0"/><path d="M20 7h7l-3.500 4z" fill="#222"/>
<text x="31" y="9" style="font-size:11.500px">EURUSD</text><use href="#i" x="85" y="3"/>
<text x="108" y="9" class="bd" style="fill:#a81010;font-size:11.500px;letter-spacing:-.35px">1,14472 <tspan style="font-weight:400">(-0,33%)</tspan></text>
<text x="199" y="9" class="bd">00:56:14</text><text x="245" y="9" textLength="66">EUR/USD Mini</text>
<rect x="767" y="0" width="74" height="19" fill="url(#gw)"/><use href="#kb" x="774" y="2"/><rect x="800" y="12" width="8" height="2" fill="#fff"/><rect x="815.500" y="4.500" width="8" height="9" fill="none" stroke="#fff" stroke-width="1.400"/><path d="M830 4l7 10M837 4l-7 10" stroke="#fff" stroke-width="2"/>

<text x="46" y="32">Ordres :</text><text x="91" y="32" class="bd g">1</text><use href="#xd" x="99" y="24"/><text x="122" y="32" class="bd">/ 0</text><use href="#gear" x="138" y="24"/>
<text x="203" y="32">Position :</text><text x="253" y="32" class="bd g">1</text><use href="#xd" x="260" y="24"/><text x="282" y="32" class="bd">/ 0</text><use href="#gear" x="298" y="24"/>
<text x="362" y="32">Gain latent :</text><text x="424" y="32" class="bd dr">-0,10 pips</text>
<text x="522" y="32">Gain Jour :</text><text x="579" y="32" class="bd g">16,40 pips</text>
<text x="679" y="32">Trades jour :</text><text x="745" y="32" class="bd g">1 <tspan class="k">/ 0 /</tspan> <tspan class="dr">0</tspan></text>

<rect class="bx" x="42.500" y="55.500" width="85" height="21" rx="4"/><text x="46" y="67" style="font-size:12px">100 unités</text><rect x="109" y="57" width="16" height="18" rx="3" fill="#efefef"/><use href="#sel" x="112" y="63"/>
<rect class="bx" x="178.500" y="55.500" width="88" height="21" rx="4"/><text x="182" y="67" style="font-size:12px">4 heures</text><rect x="248" y="57" width="16" height="18" rx="3" fill="#efefef"/><use href="#sel" x="252" y="63"/>
<use href="#ind" x="317" y="52"/>

<path d="M420 42.500C414 48 412 50 412 56V76C412 82 414 85 420 89.500" fill="#f5f5f5" stroke="#c8c8c8"/>
<path d="M414 63v9l3-4.500z" fill="#111"/>
<rect x="423.500" y="56.500" width="19" height="19" rx="3" fill="url(#gbt)" stroke="#aaa"/><use href="#wr" x="426" y="58"/>
<text x="467" y="50" class="m" style="font-size:12px">Qté</text><rect class="bx" x="445.500" y="57.500" width="45" height="21" rx="3"/><text x="487" y="68" class="e" style="font-size:12px">1</text>
<path d="M495.500 50v34M561.500 50v34M628.500 50v34" stroke="#ccc"/>
<text x="530" y="50" class="m" style="font-size:12px">Limite</text><use href="#bl1" x="499" y="57"/><use href="#bl2" x="530" y="57"/>
<text x="595" y="50" class="m" style="font-size:12px">Stop</text><use href="#bs1" x="565" y="57"/><use href="#bs2" x="596" y="57"/>
<text x="632" y="50" textLength="50" style="font-size:12px">Vente O.F.</text><use href="#i" x="684" y="44"/><text x="698" y="50" textLength="51" style="font-size:12px">Achat O.F.</text><use href="#i" x="751" y="44"/>
<rect x="632.500" y="58.500" width="62" height="27" rx="3" fill="url(#gv)" stroke="#b83030"/><text x="634" y="73" style="fill:#fff;font-size:11.500px">1,1<tspan style="font-size:23px;letter-spacing:-1.200px">446</tspan><tspan dy="-7" dx="2" style="font-size:10px">9</tspan></text>
<rect x="698.500" y="58.500" width="64" height="27" rx="3" fill="url(#ga)" stroke="#1f8a1f"/><text x="701" y="73" style="fill:#fff;font-size:11.500px">1,1<tspan style="font-size:23px;letter-spacing:-1.200px">447</tspan><tspan dy="-7" dx="2" style="font-size:10px">5</tspan></text>
<rect class="bx" x="771.500" y="50.500" width="13" height="12"/><path d="M773 56l3 5 7-11" stroke="#111" stroke-width="1.600" fill="none"/><text x="787" y="55" style="font-size:12px">S</text><rect class="bx" x="798.500" y="45.500" width="16" height="20" rx="3"/><text x="806.500" y="55" class="m" style="font-size:12px">10</text><text x="818" y="55" style="font-size:12px">pips</text>
<rect class="bx" x="771.500" y="73.500" width="12" height="12"/><text x="787" y="79" style="font-size:12px">L</text><rect x="798.500" y="67.500" width="12" height="21" rx="3" fill="#f5f5f5" stroke="#ccc"/><text x="804.500" y="78" class="m" style="font-size:12px;fill:#aaa">5</text><text x="814" y="78" style="font-size:12px">pips</text>

<text x="80" y="93" style="font-size:12.500px">Kijun Hebdo</text>
<rect x="75" y="80" width="120" height="10" fill="#f5f5f5"/><path d="M75 90.500H195" stroke="#b8b8b8"/>
<rect x="0.500" y="90.500" width="74" height="17" fill="#f4f4f4" stroke="#bbb"/><text x="4" y="99.500" style="font-size:11.500px">Prix</text><use href="#wr" x="25" y="91"/><use href="#ad" x="43" y="92"/><use href="#au" x="60" y="92"/>

<!-- ======= top header right ======= -->
<rect x="849" y="0" width="826" height="20" fill="#fdfdfd"/><path d="M849 19.500H1675" stroke="#d0d0d0"/>
<rect x="849" y="20" width="826" height="22" fill="#f3f3f3"/><path d="M849 41.500H1675" stroke="#c8c8c8"/>
<rect x="849" y="42" width="826" height="48" fill="#f5f5f5"/><path d="M849 90.500H1675" stroke="#b8b8b8"/>
<use href="#can" x="850" y="0"/><path d="M869 7h7l-3.500 4z" fill="#222"/>
<text x="880" y="9" style="font-size:11.500px">EURUSD</text><use href="#i" x="934" y="3"/>
<text x="957" y="9" class="bd" style="fill:#a81010;font-size:11.500px;letter-spacing:-.35px">1,14472 <tspan style="font-weight:400">(-0,33%)</tspan></text>
<text x="1048" y="9" class="bd">00:56:14</text><text x="1095" y="9" textLength="65">EUR/USD Mini</text>
<rect x="1598" y="0" width="77" height="19" fill="url(#gw)"/><use href="#kb" x="1605" y="2"/><rect x="1630" y="12" width="8" height="2" fill="#fff"/><rect x="1645.500" y="4.500" width="8" height="9" fill="none" stroke="#fff" stroke-width="1.400"/><path d="M1661 4l7 10M1668 4l-7 10" stroke="#fff" stroke-width="2"/>

<text x="892" y="32">Ordres :</text><text x="937" y="32" class="bd g">1</text><use href="#xd" x="946" y="24"/><text x="968" y="32" class="bd">/ 0</text><use href="#gear" x="984" y="24"/>
<text x="1046" y="32">Position :</text><text x="1095" y="32" class="bd g">1</text><use href="#xd" x="1103" y="24"/><text x="1125" y="32" class="bd">/ 0</text><use href="#gear" x="1140" y="24"/>
<text x="1202" y="32">Gain latent :</text><text x="1264" y="32" class="bd dr">-0,10 pips</text>
<text x="1359" y="32">Gain Jour :</text><text x="1416" y="32" class="bd g">16,40 pips</text>
<text x="1513" y="32">Trades jour :</text><text x="1579" y="32" class="bd g">1 <tspan class="k">/ 0 /</tspan> <tspan class="dr">0</tspan></text>

<rect class="bx" x="872.500" y="55.500" width="77" height="21" rx="4"/><text x="930" y="67" class="e" style="font-size:12px">400</text><path d="M934 63h6l-3-4zM934 69h6l-3 4z" fill="#333"/>
<rect class="bx" x="950.500" y="55.500" width="84" height="21" rx="4"/><text x="953" y="67" style="font-size:12px">(x) unités</text><rect x="1016" y="57" width="16" height="18" rx="3" fill="#efefef"/><use href="#sel" x="1019" y="63"/>
<rect class="bx" x="1057.500" y="55.500" width="88" height="21" rx="4"/><text x="1061" y="67" style="font-size:12px">1 heure</text><rect x="1127" y="57" width="16" height="18" rx="3" fill="#efefef"/><use href="#sel" x="1131" y="63"/>
<use href="#ind" x="1168" y="52"/>

<path d="M1250 42.500C1244 48 1242 50 1242 56V76C1242 82 1244 85 1250 89.500" fill="#f5f5f5" stroke="#c8c8c8"/>
<path d="M1245 63v9l3-4.500z" fill="#111"/>
<rect x="1254.500" y="56.500" width="19" height="19" rx="3" fill="url(#gbt)" stroke="#aaa"/><use href="#wr" x="1257" y="58"/>
<text x="1298" y="50" class="m" style="font-size:12px">Qté</text><rect class="bx" x="1276.500" y="57.500" width="45" height="21" rx="3"/><text x="1318" y="68" class="e" style="font-size:12px">1</text>
<path d="M1327.500 50v34M1393.500 50v34M1458.500 50v34" stroke="#ccc"/>
<text x="1361" y="50" class="m" style="font-size:12px">Limite</text><use href="#bl1" x="1330" y="57"/><use href="#bl2" x="1361" y="57"/>
<text x="1426" y="50" class="m" style="font-size:12px">Stop</text><use href="#bs1" x="1396" y="57"/><use href="#bs2" x="1427" y="57"/>
<text x="1463" y="50" textLength="50" style="font-size:12px">Vente O.F.</text><use href="#i" x="1515" y="44"/><text x="1530" y="50" textLength="51" style="font-size:12px">Achat O.F.</text><use href="#i" x="1583" y="44"/>
<rect x="1462.500" y="58.500" width="64" height="27" rx="3" fill="url(#gv)" stroke="#b83030"/><text x="1465" y="73" style="fill:#fff;font-size:11.500px">1,1<tspan style="font-size:23px;letter-spacing:-1.200px">446</tspan><tspan dy="-7" dx="2" style="font-size:10px">9</tspan></text>
<rect x="1530.500" y="58.500" width="63" height="27" rx="3" fill="url(#ga)" stroke="#1f8a1f"/><text x="1533" y="73" style="fill:#fff;font-size:11.500px">1,1<tspan style="font-size:23px;letter-spacing:-1.200px">447</tspan><tspan dy="-7" dx="2" style="font-size:10px">5</tspan></text>
<rect class="bx" x="1602.500" y="50.500" width="13" height="12"/><path d="M1604 56l3 5 7-11" stroke="#111" stroke-width="1.600" fill="none"/><text x="1618" y="55" style="font-size:12px">S</text><rect class="bx" x="1629.500" y="45.500" width="16" height="20" rx="3"/><text x="1637.500" y="55" class="m" style="font-size:12px">10</text><text x="1649" y="55" style="font-size:12px">pips</text>
<rect class="bx" x="1602.500" y="73.500" width="12" height="12"/><text x="1618" y="79" style="font-size:12px">L</text><rect x="1629.500" y="67.500" width="12" height="21" rx="3" fill="#f5f5f5" stroke="#ccc"/><text x="1635.500" y="78" class="m" style="font-size:12px;fill:#aaa">5</text><text x="1645" y="78" style="font-size:12px">pips</text>

<rect x="850.500" y="90.500" width="74" height="17" fill="#f4f4f4" stroke="#bbb"/><text x="853" y="99.500" style="font-size:11.500px">Prix</text><use href="#wr" x="874" y="91"/><use href="#ad" x="892" y="92"/><use href="#au" x="909" y="92"/>
</svg>
</body></html>
